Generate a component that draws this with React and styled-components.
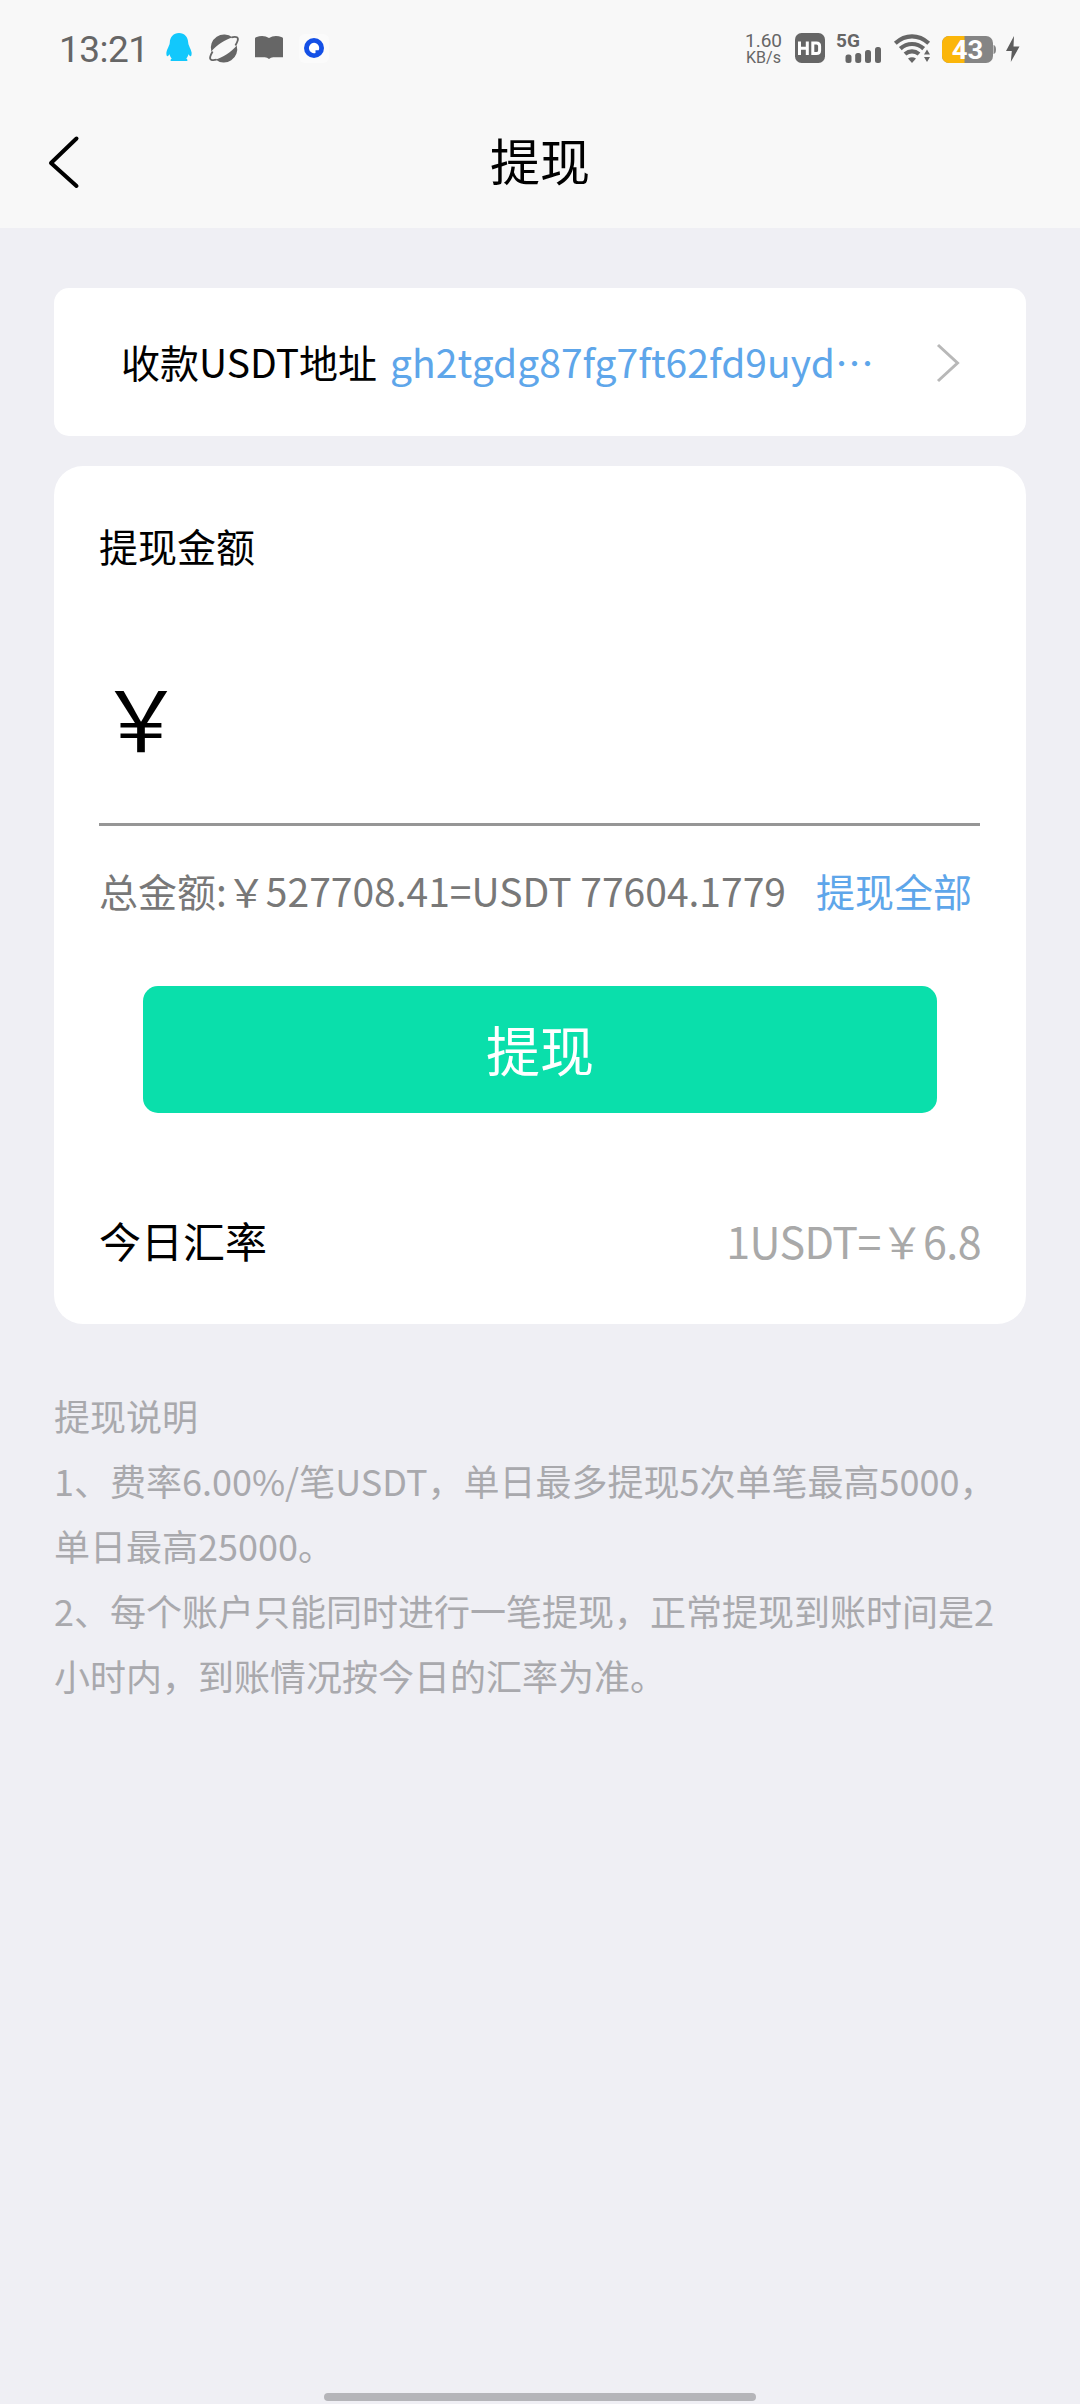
import React from "react";
import styled, { createGlobalStyle } from "styled-components";

const Global = createGlobalStyle`
  * { box-sizing: border-box; }
  body {
    margin: 0;
    background: #efeff4;
    font-family: "Noto Sans CJK SC", "Noto Sans", sans-serif;
    color: #000;
  }
`;

const Page = styled.div`
  display: flex;
  flex-direction: column;
  width: 1080px;
  height: 2404px;
  overflow: hidden;
  background: #efeff4;
`;

const Header = styled.header`
  height: 228px;
  background: #f8f8f8;
`;

const StatusBar = styled.div`
  display: flex;
  justify-content: space-between;
  height: 90px;
  padding: 33px 60px 0 59px;
  color: #666;
`;

const StatusGroup = styled.div`
  display: flex;
  align-items: flex-start;
  height: 32px;
`;

const Clock = styled.span`
  width: 107px;
  font: 400 37px/34px Roboto, sans-serif;
  letter-spacing: -0.5px;
`;

const Glyph = styled.svg`
  display: block;
  flex: none;
  width: ${(p) => p.$w}px;
  height: 32px;
  margin-right: ${(p) => p.$gap || 0}px;
  overflow: visible;
`;

const Speed = styled.div`
  display: flex;
  flex-direction: column;
  width: 50px;
  font-family: Roboto, sans-serif;
  text-align: center;
  padding-right: 13px;
  white-space: nowrap;
`;

const SpeedLine = styled.span`
  font-size: ${(p) => p.$size}px;
  line-height: ${(p) => p.$line}px;
`;

const NavBar = styled.nav`
  display: grid;
  grid-template-columns: 120px 1fr 120px;
  align-items: center;
  height: 138px;
`;

const BackButton = styled.button`
  display: flex;
  padding: 6px 0 0 46px;
  border: 0;
  background: none;
`;

const Title = styled.h1`
  margin: 0;
  font-size: 50px;
  line-height: 72px;
  font-weight: 400;
  text-align: center;
`;

const Main = styled.main`
  flex: 1;
  padding: 60px 54px 0;
`;

const AddressCard = styled.section`
  display: flex;
  align-items: center;
  height: 148px;
  padding: 0 66px 2px 67px;
  border-radius: 15px;
  background: #fff;
  font-size: 39px;
  line-height: 56px;
  white-space: nowrap;
`;

const Address = styled.span`
  flex: 1;
  margin-left: 13px;
  color: #5ea6ea;
`;

const Chevron = styled.svg`
  width: 24px;
  height: 40px;
  margin-top: 3px;
`;

const AmountCard = styled.section`
  display: flex;
  flex-direction: column;
  height: 858px;
  margin-top: 30px;
  padding: 51px 46px 0 45px;
  border-radius: 29px;
  background: #fff;
`;

const Label = styled.span`
  font-size: ${(p) => p.$size}px;
  line-height: 56px;
`;

const AmountField = styled.div`
  height: 253px;
  padding-top: 101px;
  border-bottom: 3px solid #969696;
  font-size: 84px;
  line-height: 84px;
`;

const TotalRow = styled.div`
  display: flex;
  justify-content: space-between;
  margin-top: 36px;
  padding-right: 8px;
  font-size: 39px;
  line-height: 56px;
  color: #787878;
  white-space: nowrap;
`;

const LinkText = styled.span`
  color: #5ea6ea;
`;

const SubmitButton = styled.button`
  height: 127px;
  margin: 68px 43px 0 44px;
  padding: 0 0 2px;
  border: 0;
  border-radius: 15px;
  background: #0adfab;
  color: #fff;
  font-family: inherit;
  font-size: 54px;
  line-height: 77px;
`;

const RateRow = styled.div`
  display: flex;
  justify-content: space-between;
  margin-top: 99px;
  white-space: nowrap;
`;

const RateValue = styled.span`
  margin-right: -1px;
  font-size: 43px;
  line-height: 56px;
  letter-spacing: -0.6px;
  color: #a9a9a9;
`;

const Notes = styled.section`
  margin-top: 59px;
  font-size: 36px;
  line-height: 65px;
  color: #a9a9ad;
`;

const NoteLine = styled.p`
  margin: 0;
`;

const HomeBar = styled.div`
  width: 432px;
  height: 8px;
  margin: 0 auto 3px;
  border-radius: 4px;
  background: #b5b5b9;
`;

const Penguin = () => (
  <Glyph $w={26} $gap={17} viewBox="0 0 26 32">
    <path
      fill="#12c8fc"
      d="M13 0C7.500 0 4 4 3.800 9.500C3.800 12 1 16 .4 19.500C.2 22 .8 23.400 1.500 23.200C2.200 23 3 22 3.500 21.200C4 23 4.800 24.500 5.800 25.500C4.600 26.200 4.200 27 4.800 28H21.200C21.800 27 21.400 26.200 20.200 25.500C21.200 24.500 22 23 22.500 21.200C23 22 23.800 23 24.500 23.200C25.200 23.400 25.800 22 25.600 19.500C25 16 22.200 12 22.200 9.500C22 4 18.500 0 13 0Z"
    />
  </Glyph>
);

const Planet = () => (
  <Glyph $w={30} $gap={16} viewBox="0 0 30 32">
    <path fill="#666" d="M2.300 18.500A13.300 13.300 0 0 1 23.500 4.500C17 6 7 12.500 2.300 18.500Z" />
    <path fill="#666" d="M27.700 12.500A13.300 13.300 0 0 1 6.500 26.500C13 25 23 18.500 27.700 12.500Z" />
    <path
      d="M22.500 4.300C27.800 3 29.600 4.600 28.700 7.600C28.300 9 27.500 10.500 26.400 12.500M7.500 26.700C2.200 28 .4 26.400 1.300 23.400C1.700 22 2.500 20.500 3.600 18.500"
      fill="none"
      stroke="#666"
      strokeWidth="1.800"
    />
  </Glyph>
);

const Book = () => (
  <Glyph $w={28} $gap={21} viewBox="0 0 28 32">
    <path
      fill="#666"
      d="M0 5.500Q0 4.600 1 4.200Q8.500 1.600 14 5Q19.500 1.600 27 4.200Q28 4.600 28 5.500V24.200H18.200Q15.800 24.400 14 26Q12.200 24.400 9.800 24.200H0Z"
    />
  </Glyph>
);

const Ring = () => (
  <Glyph $w={20} viewBox="0 0 20 32">
    <rect x="-5" y="1" width="30" height="29" rx="6" fill="#fbfbfb" />
    <circle cx="10" cy="15" r="10" fill="#1450e6" />
    <path fill="#fff" d="M10 9.800A5.200 5.200 0 1 0 11.500 20V17.200H14.700A5.200 5.200 0 0 0 10 9.800Z" />
  </Glyph>
);

const Hd = () => (
  <Glyph $w={30} $gap={11} viewBox="0 0 30 32">
    <rect width="30" height="30" rx="6.500" fill="#666" />
    <path d="M4.500 8.500V22M12.300 8.500V22M4.500 15.200H12.300" fill="none" stroke="#fff" strokeWidth="3" />
    <path d="M17.800 10H21.500Q24.600 10 24.600 13V17.500Q24.600 20.500 21.500 20.500H17.800Z" fill="none" stroke="#fff" strokeWidth="3" />
  </Glyph>
);

const Signal = () => (
  <Glyph $w={46} $gap={12} viewBox="0 0 46 32">
    <text x="0" y="13.700" fontFamily="Roboto, sans-serif" fontWeight="700" fontSize="19" fill="#666" textLength="24">
      5G
    </text>
    <g fill="#666">
      <rect x="9.500" y="21.500" width="6" height="8.500" rx="2.500" />
      <rect x="19.200" y="20" width="6" height="10" rx="2.500" />
      <rect x="29" y="17" width="6" height="13" rx="2.500" />
      <rect x="39" y="14" width="6" height="16" rx="2.500" />
    </g>
  </Glyph>
);

const Wifi = () => (
  <Glyph $w={37} $gap={11} viewBox="0 0 37 32">
    <g fill="none" stroke="#666" strokeWidth="4.200">
      <path d="M1.300 10.200Q9 3.300 18 3.300T34.700 10.200" />
      <path d="M6.300 15.600Q11.500 11 18 11T29.700 15.600" />
      <path d="M11 21Q14.200 18.300 18 18.300T25 21" />
    </g>
    <path fill="#666" d="M14 25.500Q18 22.800 22 25.500L18 30Z" />
    <path fill="#666" d="M30 21.500L33 16.500L36 21.500ZM30 24L33 29L36 24Z" />
  </Glyph>
);

const Battery = () => (
  <Glyph $w={54} $gap={10} viewBox="0 0 54 32">
    <clipPath id="cell">
      <rect y="3" width="51" height="27" rx="7" />
    </clipPath>
    <g clipPath="url(#cell)">
      <rect width="54" height="32" fill="#858585" />
      <rect width="22.500" height="32" fill="#fbb60a" />
    </g>
    <path d="M51.500 12Q54 12.500 54 16.500T51.500 21Z" fill="#858585" />
    <text
      x="9.800"
      y="26"
      fontFamily="Roboto, sans-serif"
      fontWeight="700"
      fontSize="25"
      fill="#fff"
      textLength="31.500"
      lengthAdjust="spacingAndGlyphs"
    >
      43
    </text>
  </Glyph>
);

const Bolt = () => (
  <Glyph $w={14} viewBox="0 0 14 32">
    <path fill="#5c5c5c" d="M8 3L0 18H5.800L4.800 29L13.500 13.500H7.500Z" />
  </Glyph>
);

export default function App() {
  return (
    <Page lang="zh-CN">
      <Global />
      <Header>
        <StatusBar>
          <StatusGroup>
            <Clock>13:21</Clock>
            <Penguin />
            <Planet />
            <Book />
            <Ring />
          </StatusGroup>
          <StatusGroup>
            <Speed>
              <SpeedLine $size={19} $line={16}>1.60</SpeedLine>
              <SpeedLine $size={16} $line={18}>KB/s</SpeedLine>
            </Speed>
            <Hd />
            <Signal />
            <Wifi />
            <Battery />
            <Bolt />
          </StatusGroup>
        </StatusBar>
        <NavBar>
          <BackButton aria-label="返回">
            <svg width="36" height="54" viewBox="0 0 36 54">
              <path d="M30.500 3.500L5 28L30.500 51" fill="none" stroke="#000" strokeWidth="4" strokeLinecap="round" strokeLinejoin="round" />
            </svg>
          </BackButton>
          <Title>提现</Title>
        </NavBar>
      </Header>
      <Main>
        <AddressCard>
          <span>收款USDT地址</span>
          <Address>gh2tgdg87fg7ft62fd9uyd…</Address>
          <Chevron viewBox="0 0 24 40">
            <path d="M2 2L21.500 20L2 38" fill="none" stroke="#b8b8b8" strokeWidth="3" />
          </Chevron>
        </AddressCard>
        <AmountCard>
          <Label $size={39}>提现金额</Label>
          <AmountField>￥</AmountField>
          <TotalRow>
            <span>总金额:￥527708.41=USDT 77604.1779</span>
            <LinkText>提现全部</LinkText>
          </TotalRow>
          <SubmitButton>提现</SubmitButton>
          <RateRow>
            <Label $size={42}>今日汇率</Label>
            <RateValue>1USDT=￥6.8</RateValue>
          </RateRow>
        </AmountCard>
        <Notes>
          <NoteLine>提现说明</NoteLine>
          <NoteLine>1、费率6.00%/笔USDT，单日最多提现5次单笔最高5000，单日最高25000。</NoteLine>
          <NoteLine>2、每个账户只能同时进行一笔提现，正常提现到账时间是2小时内，到账情况按今日的汇率为准。</NoteLine>
        </Notes>
      </Main>
      <HomeBar />
    </Page>
  );
}
